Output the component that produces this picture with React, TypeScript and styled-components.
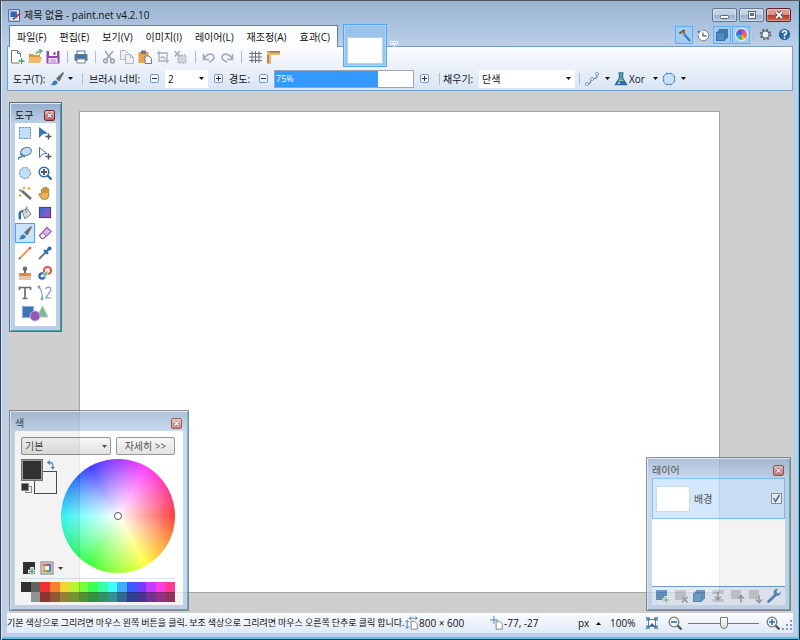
import React from "react";
import styled, { createGlobalStyle, css } from "styled-components";

const GlobalStyle = createGlobalStyle`
  *, *::before, *::after { box-sizing: border-box; }
  body { margin: 0; }
  body, button, input, select {
    font-family: "Open Sans", "Noto Sans CJK KR", sans-serif;
    font-size: 10px;
    line-height: 16px;
    color: #111;
  }
  button { padding: 0; border: 0; background: none; }
  svg { display: block; flex: none; }
`;

/* ---------- icons ---------- */

const art = {
  app: (
    <>
      <rect x="1" y="1" width="13" height="14" fill="#eef4fc" stroke="#26406c" />
      <rect x="3" y="3" width="8" height="7" fill="#2f62b8" />
      <path d="M3 12h8" stroke="#8fa9d4" />
      <path d="M15 5 9 11" stroke="#b03a48" strokeWidth="2" />
      <path d="M9 11l-3 3 1-4z" fill="#222" />
    </>
  ),
  newFile: (
    <>
      <path d="M2.500 1.500h6l3 3v9.500h-9z" fill="#fff" stroke="#777" />
      <path d="M8.500 1.500v3h3" fill="none" stroke="#777" />
      <path d="M12 8v7M8.500 11.500h7" stroke="#fff" strokeWidth="3" />
      <path d="M12.500 9v6M9.500 12h6" stroke="#4ba06a" strokeWidth="1.300" />
    </>
  ),
  open: (
    <>
      <path d="M2 5h4l1 1h6v8H2z" fill="#d69a45" />
      <path d="M1 14l2-6h12l-2 6z" fill="#f2b968" />
      <path d="M9 5q1-3 5-3M12 0l3 2-3 3" fill="none" stroke="#6aa98a" strokeWidth="1.400" />
    </>
  ),
  save: (
    <>
      <path d="M1.500 2h13v12.500h-13z" fill="#9149ae" />
      <rect x="4" y="2" width="8" height="5" fill="#fff" />
      <rect x="8.500" y="3" width="2" height="3" fill="#9149ae" />
      <rect x="3.500" y="9" width="9" height="5" fill="#f4eaf7" />
      <path d="M5 11h6M5 13h6" stroke="#9149ae" strokeWidth=".7" />
    </>
  ),
  print: (
    <>
      <rect x="4" y="2" width="8" height="4" fill="#fff" stroke="#3d77ab" />
      <rect x="1.500" y="5" width="13" height="7" rx="1" fill="#68788a" />
      <rect x="3.500" y="6" width="9" height="3" fill="#3d77ab" />
      <rect x="4" y="10" width="8" height="4" fill="#fff" stroke="#7c8997" />
    </>
  ),
  cut: (
    <g fill="none" stroke="#9aa3ad" strokeWidth="1.500">
      <path d="M4 2l7 9M12 2L5 11" />
      <circle cx="4.500" cy="12" r="1.900" />
      <circle cx="11.500" cy="12" r="1.900" />
    </g>
  ),
  copy: (
    <g fill="#eceff4" stroke="#b3b9c1">
      <path d="M1.500 1.500h5l3 3v6h-8z" />
      <path d="M6.500 5.500h5l3 3v6h-8z" />
      <path d="M11.500 5.500v3h3" fill="none" />
    </g>
  ),
  paste: (
    <>
      <rect x="1.500" y="3" width="10" height="11" fill="#e3a44c" />
      <rect x="4" y="1.500" width="5" height="3.500" fill="#777" />
      <path d="M8 7h4l2.500 2.500v5H8z" fill="#fff" stroke="#777" />
    </>
  ),
  crop: (
    <g fill="none" stroke="#aab1ba" strokeWidth="1.400">
      <path d="M4 2v10h10M2 4h10v10" />
      <path d="M5.500 9.500l2-2 3 2.500" />
    </g>
  ),
  deselect: (
    <>
      <rect x="5" y="6" width="8" height="8" fill="#cfd4da" stroke="#a8afb8" strokeDasharray="2 1" />
      <path d="M1.500 2l5.500 5.500M7 2L1.500 7.500" stroke="#a8afb8" strokeWidth="1.600" />
    </>
  ),
  undo: (
    <path d="M2.500 5v5.500h5.500M3 10C6 3.500 13 4 13 8.500c0 2.500-3 3.500-5 5" fill="none" stroke="#a2aab5" strokeWidth="1.600" />
  ),
  redo: (
    <path d="M13.500 5v5.500H8M13 10C10 3.500 3 4 3 8.500c0 2.500 3 3.500 5 5" fill="none" stroke="#a2aab5" strokeWidth="1.600" />
  ),
  grid: <path d="M5 2v12M8.500 2v12M12 2v12M2 4.500h13M2 8h13M2 11.500h13" stroke="#6a7078" />,
  rulers: (
    <>
      <path d="M2 2h13v4H6v9H2z" fill="#e8b676" />
      <path d="M6 2v2M8 2v2M10 2v2M12 2v2M14 2v2M2 7h2M2 9h2M2 11h2M2 13h2" stroke="#6b4a1c" strokeWidth=".8" />
      <path d="M2.500 2.500h12" stroke="#9c6d2d" strokeWidth=".6" />
    </>
  ),
  brush: (
    <>
      <path d="M14 2L8 7.500l2 2z" fill="#6e6e6e" stroke="#6e6e6e" strokeWidth="1.600" strokeLinejoin="round" />
      <path d="M1.500 14c2-.5 1.500-2.500 3-4 2-1.800 5 .8 4 2.500C7 14.500 3.500 14.500 1.500 14z" fill="#3d7fc1" />
    </>
  ),
  hammer: (
    <>
      <path d="M7 6l7 8" stroke="#3f79b6" strokeWidth="2.200" />
      <path d="M2 6l5-4 4 1-2 1.500L10 6 8.500 7.500 6.500 6 4 8z" fill="#666" stroke="#fff" strokeWidth=".5" />
    </>
  ),
  history: (
    <>
      <circle cx="8.500" cy="8.500" r="6" fill="#fff" stroke="#6e7885" strokeDasharray="31 7" strokeDashoffset="12" />
      <path d="M1 3h5L3 7z" fill="#4c91cf" />
      <path d="M8 5v4h4" fill="none" stroke="#555" strokeWidth="1.300" />
    </>
  ),
  layers: (
    <>
      <rect x="5.500" y="2.500" width="8" height="8" fill="#4b83bf" stroke="#3c6fa8" />
      <rect x="4" y="4" width="8" height="8" fill="#4b83bf" stroke="#3c6fa8" />
      <rect x="2.500" y="5.500" width="8" height="8" fill="#5189c2" stroke="#3c6fa8" />
    </>
  ),
  gear: (
    <g fill="none" stroke="#5f666e">
      <circle cx="8" cy="8" r="6.200" strokeWidth="2" strokeDasharray="2.430 2.430" />
      <circle cx="8" cy="8" r="4.400" strokeWidth="1.600" fill="#eaf1f9" />
    </g>
  ),
  help: (
    <>
      <circle cx="8" cy="8" r="7" fill="#2d68a6" />
      <path d="M5.500 6q0-2.500 2.500-2.500T10.500 6Q10.500 7.500 8 8v2" fill="none" stroke="#fff" strokeWidth="1.800" />
      <circle cx="8" cy="12.200" r="1.100" fill="#fff" />
    </>
  ),
  curve: (
    <g fill="#fff" stroke="#7595b8">
      <path d="M3 13C8 14 6 9 8 8s6 1 5-5" fill="none" stroke="#6f87a3" strokeWidth="1.200" />
      <circle cx="3" cy="13" r="1.500" />
      <circle cx="8" cy="8" r="1.500" />
      <circle cx="13" cy="3" r="1.500" />
    </g>
  ),
  flask: (
    <>
      <path d="M5.500 2h5M6.500 2v5L2.500 13.500h11L9.500 7V2z" fill="#dfeefa" stroke="#2f6ca8" strokeWidth="1.400" />
      <path d="M7 2h2v5l1.500 2.500h-5L7 7z" fill="#63a57c" />
      <path d="M4.500 10h7l2.500 4H2z" fill="#2f6ca8" />
      <circle cx="6" cy="12" r="1" fill="#cfe5f8" />
    </>
  ),
  selectionMode: (
    <>
      <rect x="2.500" y="2.500" width="11" height="11" rx="4" fill="#c7e3fb" stroke="#6fa3d2" />
      <path d="M5 2.500h6M5 13.500h6M2.500 5v6M13.500 5v6" stroke="#5d88b0" strokeWidth="1.400" strokeDasharray="2 1.500" />
    </>
  ),
  rectSelect: (
    <rect x="2.500" y="2.500" width="11" height="11" fill="#bfe0fc" stroke="#6d8297" strokeDasharray="2 1" />
  ),
  moveSelected: (
    <>
      <path d="M2 2l9 6.500-5 .5-4 4z" fill="#3c77b3" />
      <path d="M11.500 8.500v6M8.500 11.500h6" stroke="#555" strokeWidth="1.500" />
    </>
  ),
  lasso: (
    <>
      <ellipse cx="9" cy="6.500" rx="5.500" ry="4" transform="rotate(-20 9 6.500)" fill="#bfe0fc" stroke="#6d8297" strokeWidth="1.200" />
      <path d="M3 9c3 0 3 3 1 3s-3 1-2 2.500M5 10l3 2" fill="none" stroke="#3c77b3" strokeWidth="1.400" />
    </>
  ),
  moveSelection: (
    <>
      <path d="M2.500 2.500l7.500 6-4.500.5-3 3.500z" fill="#fff" stroke="#3c77b3" />
      <path d="M11.500 8.500v6M8.500 11.500h6" stroke="#555" strokeWidth="1.500" />
    </>
  ),
  ellipseSelect: <circle cx="8" cy="8" r="5.500" fill="#bfe0fc" stroke="#7d93a8" strokeDasharray="3 .6" />,
  zoomTool: (
    <>
      <path d="M10.500 10.500l4 4" stroke="#2f6ca8" strokeWidth="2.400" />
      <circle cx="7" cy="7" r="4.800" fill="#eaf4fd" stroke="#2f6ca8" strokeWidth="1.500" />
      <path d="M7 4v6M4 7h6" stroke="#555" strokeWidth="1.800" />
    </>
  ),
  wand: (
    <>
      <path d="M5 6l9 8" stroke="#6b6b6b" strokeWidth="2.400" />
      <path d="M2 5l3 1" stroke="#8c8c8c" strokeWidth="2" />
      <path d="M7 1.500v3M5.500 3h3M12 2v3M10.500 3.500h3M3 9v3M1.500 10.500h3" stroke="#e9a548" strokeWidth="1.200" />
    </>
  ),
  hand: (
    <path
      d="M4.500 9V4.500q.9-1.200 1.800 0V3q.9-1.200 1.800 0V2.500q.9-1.200 1.800 0V4q.9-1.200 1.800 0v7q-.5 3.500-4 3.500T3.500 12L1.500 9.500Q2.500 8 4.500 9zM6.300 4.500V8M8.100 3v5M9.900 4v4"
      fill="#eab25c"
      stroke="#a9762a"
      strokeWidth=".9"
    />
  ),
  bucket: (
    <>
      <path d="M5 6l5-2.500 4 5.500-6 5z" fill="#d5d9de" stroke="#7c838b" />
      <path d="M9 8V2.500q1.500-1.500 2 0" fill="none" stroke="#7c838b" />
      <path d="M2 14V8q0-2 4-2.500L3.500 8v6z" fill="#2f6ca8" stroke="#2f6ca8" />
    </>
  ),
  gradient: (
    <>
      <defs>
        <linearGradient id="gradientTool" x1="0" y1="0" x2="1" y2="1">
          <stop offset="0" stopColor="#2577d8" />
          <stop offset="1" stopColor="#b64bd2" />
        </linearGradient>
      </defs>
      <rect x="2.500" y="2.500" width="11" height="10" fill="url(#gradientTool)" stroke="#4b4b5b" strokeWidth="1.200" />
    </>
  ),
  eraser: (
    <>
      <path d="M2.500 10.500L10 2.500l4 4-7.500 7H4.500z" fill="#fff" stroke="#9149ae" strokeWidth="1.200" />
      <path d="M5.500 7.500l4 3.500L14 6.500l-4-4z" fill="#dcb6e9" stroke="#9149ae" />
    </>
  ),
  pencil: (
    <>
      <path d="M3 13l9-9" stroke="#e6a660" strokeWidth="2.200" />
      <path d="M12 4l1.800-1.800" stroke="#d4503e" strokeWidth="2.200" />
      <path d="M1.500 14.500L3.800 13.800 2.200 12.200z" fill="#444" />
    </>
  ),
  picker: (
    <>
      <path d="M2 14l7-7" stroke="#6b7784" strokeWidth="2" />
      <path d="M7 5l4 4M9 7l4-4" stroke="#2f6ca8" strokeWidth="2.200" />
      <circle cx="12.500" cy="3.500" r="2.100" fill="#2f6ca8" />
    </>
  ),
  stamp: (
    <>
      <circle cx="8" cy="3.800" r="2.300" fill="#6b6b6b" />
      <path d="M8 5v4" stroke="#6b6b6b" strokeWidth="2" />
      <rect x="2" y="8" width="12" height="3" rx="1" fill="#e08a48" />
      <path d="M2 12h12M2 14h12" stroke="#d98a50" />
    </>
  ),
  recolor: (
    <>
      <circle cx="10.500" cy="5.500" r="3.500" fill="none" stroke="#dc5a3c" strokeWidth="2.200" />
      <circle cx="5" cy="11" r="2.600" fill="none" stroke="#2f6ca8" strokeWidth="2.400" />
      <path d="M6 9l5-4v3q0 3-4 4z" fill="#7db894" stroke="#fff" strokeWidth=".6" />
    </>
  ),
  textTool: <path d="M2.500 5V2.500h11V5M8 2.500v11M5.500 13.500h5" fill="none" stroke="#6d6d6d" strokeWidth="1.700" />,
  lineCurve: (
    <g fill="none" stroke="#6c9bca" strokeWidth="1.200">
      <path d="M2 2q4 5 3 12" />
      <path d="M9 4q1-2.500 4-1.500 2 2-1 5.500l-3 5h5.500" />
      <circle cx="2" cy="2" r=".8" fill="#fff" />
      <circle cx="5" cy="14" r=".8" fill="#fff" />
    </g>
  ),
  swap: (
    <path d="M8 1L4 4l4 3M4 4h5q3 0 3 4v5M9.500 10.500l2.500 3 2.500-3" fill="none" stroke="#2f74b8" strokeWidth="1.800" />
  ),
  addColor: (
    <>
      <path d="M2 2h12v12H2z" fill="#000" />
      <path d="M11 7v9M7 11.500h9" stroke="#fff" strokeWidth="3.500" />
      <path d="M11 8.500v6M8 11.500h6" stroke="#3e8e61" strokeWidth="1.500" />
    </>
  ),
  palette: (
    <>
      <rect x="2" y="2" width="12" height="12" fill="#fff" stroke="#555" />
      <path d="M3.500 3.500H8V6H3.500z" fill="#d7522f" />
      <path d="M8 3.500h4.500V6H8z" fill="#7d3f9f" />
      <path d="M3.500 6H6v4H3.500z" fill="#e9a133" />
      <path d="M10 6h2.500v4H10z" fill="#2f6ca8" />
      <path d="M3.500 10H8v2.500H3.500z" fill="#b78f37" />
      <path d="M8 10h4.500v2.500H8z" fill="#3e8e61" />
    </>
  ),
  layerAdd: (
    <>
      <rect x="2" y="2" width="11" height="10" fill="#3c77b3" />
      <path d="M12 8v7M8.500 11.500h7" stroke="#fff" strokeWidth="3" />
      <path d="M12 9v6M9 12h6" stroke="#6fae86" strokeWidth="1.500" />
    </>
  ),
  layerDelete: (
    <>
      <rect x="2" y="2" width="11" height="10" fill="#b5bac1" />
      <path d="M9 9l5.500 5.500M14.500 9L9 14.500" stroke="#83888f" strokeWidth="1.600" />
    </>
  ),
  layerMerge: (
    <>
      <path d="M2.500 2h11v4h-11zM2.500 11h11v3h-11z" fill="#b5bac1" />
      <path d="M8 4v7M5 8.500L8 11.500l3-3" fill="none" stroke="#83888f" strokeWidth="1.600" />
    </>
  ),
  layerUp: (
    <>
      <rect x="2" y="2" width="10" height="9" fill="#b5bac1" />
      <path d="M12 14.500V8M9 10.500L12 7.500l3 3" fill="none" stroke="#83888f" strokeWidth="1.600" />
    </>
  ),
  layerDown: (
    <>
      <rect x="2" y="2" width="10" height="9" fill="#b5bac1" />
      <path d="M12 7.500v6.500M9 11.500l3 3 3-3" fill="none" stroke="#83888f" strokeWidth="1.600" />
    </>
  ),
  wrench: (
    <>
      <path d="M2.500 13.500L10 6.500" stroke="#2f6ca8" strokeWidth="2.800" strokeLinecap="round" />
      <path d="M14.500 3.500a3.500 3.500 0 1 1-2.500-2.500L10.500 3l.5 2 2 .5z" fill="#2f6ca8" />
    </>
  ),
  imageSize: (
    <>
      <path d="M7 6h4l3 3v6H7z" fill="#fff" stroke="#777" />
      <path d="M5 2.500h9M7 .5l-2 2 2 2M12 .5l2 2-2 2M2.500 5v9M.5 7l2-2 2 2M.5 12l2 2 2-2" fill="none" stroke="#3c77b3" />
    </>
  ),
  cursorPos: (
    <>
      <path d="M7 6h4l3 3v6H7z" fill="#fff" stroke="#777" />
      <path d="M4.500 0v9M0 4.500h9" stroke="#3c77b3" />
    </>
  ),
  fit: (
    <>
      <rect x="4.500" y="4.500" width="7" height="7" fill="#fff" stroke="#777" />
      <path d="M5.500 11l2.500-3 3 3z" fill="#2f6ca8" />
      <path d="M2 2l2.500 2.500M14 2l-2.500 2.500M2 14l2.500-2.500M14 14l-2.500-2.500M5 2v3H2M11 2v3h3M5 14v-3H2M11 14v-3h3" fill="none" stroke="#3c77b3" strokeWidth="1.200" />
    </>
  ),
  zoomOut: (
    <>
      <path d="M10.500 10.500l4 4" stroke="#555" strokeWidth="2.400" />
      <circle cx="7" cy="7" r="4.800" fill="#f3f8fd" stroke="#777" strokeWidth="1.300" />
      <path d="M4 7h6" stroke="#2f6ca8" strokeWidth="1.600" />
    </>
  ),
  zoomIn: (
    <>
      <path d="M10.500 10.500l4 4" stroke="#555" strokeWidth="2.400" />
      <circle cx="7" cy="7" r="4.800" fill="#f3f8fd" stroke="#777" strokeWidth="1.300" />
      <path d="M4 7h6M7 4v6" stroke="#2f6ca8" strokeWidth="1.600" />
    </>
  ),
};

type IconName = keyof typeof art;

function Icon({ name, size = 16 }: { name: IconName; size?: number }) {
  return (
    <svg width={size} height={size} viewBox="0 0 16 16" aria-hidden="true">
      {art[name]}
    </svg>
  );
}

function Caret({ up = false }: { up?: boolean }) {
  return (
    <svg width="5" height="3" viewBox="0 0 5 3" aria-hidden="true">
      <path d={up ? "M0 3h5L2.500 0z" : "M0 0h5L2.500 3z"} fill="#111" />
    </svg>
  );
}

/* ---------- window frame ---------- */

const Window = styled.div`
  display: flex;
  flex-direction: column;
  min-height: 100vh;
  padding: 0 7px 7px;
  background: linear-gradient(#9ab3cf 0, #b9cfea 44px);
  border-top: 1px solid #55585e;
  box-shadow: inset 1px 0 #3c3f4c, inset 2px 0 #d5e4f5, inset -1px 0 #1d2b35, inset -2px 0 #55cbe6,
    inset 0 -1px #142c36, inset 0 -3px #4cc9e8;
`;

const TitleBar = styled.header`
  display: flex;
  align-items: center;
  height: 24px;
  padding: 4px 2px 0 1px;
  gap: 3px;
`;

const Title = styled.h1`
  flex: 1;
  margin: 0;
  font-size: 10px;
  font-weight: 400;
`;

const CaptionButtons = styled.div`
  display: flex;
  gap: 2px;
`;

const CaptionButton = styled.button<{ $danger?: boolean }>`
  display: grid;
  place-items: center;
  width: 25px;
  height: 14px;
  border: 1px solid ${(p) => (p.$danger ? "#5c2430" : "#65778d")};
  border-radius: 2px;
  box-shadow: inset 0 0 0 1px rgba(255, 255, 255, 0.35);
  background: ${(p) =>
    p.$danger
      ? "linear-gradient(#dd9b90 0 45%, #b8392c 50%, #d3694f)"
      : "linear-gradient(#c3d3e6 0 45%, #9cb2cc 50%, #b3c8e0)"};
`;

const MenuRow = styled.div`
  display: flex;
  position: relative;
  z-index: 1;
  justify-content: space-between;
  height: 22px;
  margin: 0 0 -1px;
  padding-left: 2px;
`;

const MenuBar = styled.nav`
  display: flex;
  align-items: center;
  padding: 0 7px;
  gap: 13px;
  background: #fbfdff;
  border: 1px solid #587eae;
  border-bottom: 0;
`;

const MenuItem = styled.button`
  white-space: nowrap;
`;

const DocumentTab = styled.button`
  position: absolute;
  left: 336px;
  top: -1px;
  width: 44px;
  height: 43px;
  padding: 12px 3px 2px;
  border: 1px solid #51a7f3;
  box-shadow: inset 0 0 0 1px #add5f9;
  background: #99c3ed;
`;

const Thumb = styled.span`
  display: block;
  width: 100%;
  height: 100%;
  background: #fff;
  border: 1px solid #b7cfe6;
`;

const TabList = styled.button`
  position: absolute;
  left: 383px;
  top: 16px;
`;

const Utilities = styled.div`
  display: flex;
  align-items: center;
  gap: 1px;
  height: 19px;
`;

const Utility = styled.button<{ $on?: boolean }>`
  display: grid;
  place-items: center;
  width: 18px;
  height: 18px;
  border: 1px solid ${(p) => (p.$on ? "#60aef3" : "transparent")};
  background: ${(p) => (p.$on ? "#a3ccf3" : "transparent")};
`;

const Wheel = styled.span`
  display: block;
  width: 114px;
  height: 114px;
  border-radius: 50%;
  background: radial-gradient(closest-side, #fff, rgba(255, 255, 255, 0)),
    conic-gradient(from 90deg, #f00, #ff0, #0f0, #0ff, #00f, #f0f, #f00);
`;

const MiniWheel = styled.span`
  width: 13px;
  height: 13px;
  border: 1px solid #fff;
  border-radius: 50%;
  background: conic-gradient(#a04fd0 0 12%, #e85a9c 0 25%, #f2603f 0 37%, #f6b43a 0 50%, #55b557 0 62%, #3fb6d0 0 75%, #3f6ed8 0 87%, #6a4fd0 0);
`;

/* ---------- ribbon ---------- */

const Ribbon = styled.div`
  border: 1px solid #7b9dc9;
  background: linear-gradient(#fcfdff, #d9e4f4);
`;

const ToolbarRow = styled.div<{ $options?: boolean }>`
  display: flex;
  align-items: center;
  height: ${(p) => (p.$options ? 23 : 20)}px;
  padding-left: ${(p) => (p.$options ? 5 : 1)}px;
  gap: ${(p) => (p.$options ? 0 : 2)}px;
`;

const ToolbarButton = styled.button<{ $w?: number }>`
  display: grid;
  place-items: center;
  flex: none;
  width: ${(p) => p.$w ?? 16}px;
  height: 18px;
`;

const Separator = styled.span<{ $w?: number }>`
  flex: none;
  width: ${(p) => p.$w ?? 8}px;
  height: 12px;
  background: linear-gradient(#a9bdd6, #a9bdd6) center / 1px 100% no-repeat;
`;

const OptionLabel = styled.label<{ $w: number }>`
  flex: none;
  width: ${(p) => p.$w}px;
  white-space: nowrap;
`;

const StepButton = styled.button`
  display: grid;
  place-items: center;
  flex: none;
  width: 9px;
  height: 9px;
  margin: 0 6px;
  border: 1px solid #6f9cca;
  border-radius: 2px;
  background: #f3f8fe;
`;

const SelectBox = styled.span<{ $w: number; $raised?: boolean }>`
  display: grid;
  flex: none;
  align-items: center;
  width: ${(p) => p.$w}px;
  height: 18px;
  > * { grid-area: 1 / 1; }
  > svg { justify-self: end; margin-right: 4px; pointer-events: none; }
  > select {
    appearance: none;
    width: 100%;
    height: 100%;
    padding: 0 3px;
    border: 0;
    background: #fff;
    ${(p) =>
      p.$raised &&
      css`
        border: 1px solid #777;
        border-radius: 2px;
        background: linear-gradient(#f4f4f4, #dadada);
      `}
  }
`;

const Meter = styled.span`
  display: grid;
  flex: none;
  align-items: center;
  width: 140px;
  height: 18px;
  > * { grid-area: 1 / 1; }
  > input {
    appearance: none;
    width: 100%;
    height: 100%;
    margin: 0;
    border: 1px solid #9aa7b8;
    background: linear-gradient(90deg, #3399ff 75%, #fff 75%);
  }
  > input::-webkit-slider-thumb { appearance: none; width: 1px; height: 1px; }
  > output { padding-left: 2px; color: #fff; font-size: 9px; pointer-events: none; }
`;

/* ---------- workspace ---------- */

const Workspace = styled.main`
  display: flex;
  position: relative;
  flex: 1;
  padding: 20px 73px;
  background: #cfcfcf;
`;

const Canvas = styled.div`
  flex: 1;
  margin-left: -1px;
  background: #fff;
  border: 1px solid #a4a4a4;
`;

const Palette = styled.section<{ $dim?: boolean }>`
  position: absolute;
  padding: 0 5px 5px;
  border: 1px solid #5f6d78;
  box-shadow: inset 1px 1px #dbe7f4, inset -1px -1px #45a0ad;
  background: linear-gradient(#94aecb, #b9cfea 20px);
  opacity: ${(p) => (p.$dim ? 0.76 : 1)};
`;

const ToolsPalette = styled(Palette)`
  left: 2px;
  top: 11px;
  width: 53px;
`;

const ColorsPalette = styled(Palette)`
  left: 2px;
  bottom: 2px;
  width: 180px;
`;

const LayersPalette = styled(Palette)`
  right: 2px;
  bottom: 2px;
  width: 145px;
`;

const PaletteTitle = styled.header`
  display: flex;
  align-items: center;
  justify-content: space-between;
  height: 20px;
  padding: 4px 1px 0 0;
`;

const PaletteName = styled.h2`
  margin: 0;
  font-size: 10px;
  font-weight: 400;
`;

const CloseButton = styled.button`
  display: grid;
  place-items: center;
  width: 11px;
  height: 11px;
  border: 1px solid #7a2b2f;
  border-radius: 2px;
  background: linear-gradient(#e7bbb5, #c45c50);
`;

const ToolGrid = styled.div`
  display: grid;
  grid-template-columns: 20px 20px;
  grid-auto-rows: 20px;
  padding: 0 0 3px;
  background: #fff;
`;

const Tool = styled.button<{ $on?: boolean; $wide?: boolean }>`
  display: grid;
  place-items: center;
  grid-column: ${(p) => (p.$wide ? "span 2" : "auto")};
  border: 1px solid ${(p) => (p.$on ? "#4ba6f7" : "transparent")};
  background: ${(p) => (p.$on ? "#c9e3fb" : "transparent")};
`;

const ColorsBody = styled.div`
  padding: 6px 8px 3px 6px;
  background: #fff;
`;

const ColorsHeader = styled.div`
  display: flex;
  justify-content: space-between;
`;

const MoreButton = styled.button`
  width: 59px;
  height: 18px;
  border: 1px solid #777;
  border-radius: 2px;
  background: linear-gradient(#f4f4f4, #dadada);
  line-height: 14px;
`;

const WheelRow = styled.div`
  display: flex;
  justify-content: space-between;
  height: 122px;
  padding-top: 4px;
`;

const SwatchColumn = styled.div`
  display: flex;
  flex-direction: column;
  justify-content: space-between;
  width: 40px;
`;

const PaletteActions = styled.div`
  display: flex;
  align-items: center;
  gap: 2px;
`;

const WheelField = styled.div`
  display: grid;
  place-items: center;
  align-self: flex-start;
  > * { grid-area: 1 / 1; }
`;

const WheelMarker = styled.span`
  width: 8px;
  height: 8px;
  border: 1px solid #222;
  border-radius: 50%;
  background: #fff;
`;

const SwatchGrid = styled.div`
  display: grid;
  grid-template-columns: repeat(16, 1fr);
  grid-auto-rows: 10px;
  margin-top: 1px;
  padding-top: 3px;
  border-top: 1px solid #cfe0ec;
`;

const Swatch = styled.button<{ $color: string }>`
  background: ${(p) => p.$color};
`;

const LayerItem = styled.label`
  display: flex;
  align-items: center;
  height: 41px;
  padding: 0 2px 0 3px;
  gap: 4px;
  border: 1px solid #62b0f8;
  background: #c6e1fd;
`;

const LayerThumb = styled.span`
  width: 34px;
  height: 26px;
  border: 1px solid #c2ccd6;
  background: #fff;
`;

const LayerName = styled.span`
  flex: 1;
`;

const Check = styled.input`
  appearance: none;
  width: 11px;
  height: 11px;
  margin: 0;
  border: 1px solid #777;
  background: #f4f4f4
    url("data:image/svg+xml,%3Csvg xmlns='http://www.w3.org/2000/svg' viewBox='0 0 9 9'%3E%3Cpath d='M1.500 4l2 3.500L7.500 1' fill='none' stroke='%23213f8c' stroke-width='1.500'/%3E%3C/svg%3E");
`;

const LayerList = styled.div`
  height: 108px;
  background: #fff;
`;

const LayerTools = styled.div`
  display: flex;
  align-items: center;
  justify-content: space-between;
  height: 19px;
  padding: 0 3px 0 2px;
  border-top: 1px solid #4c7db4;
  background: #dbe6f4;
`;

/* ---------- status bar ---------- */

const StatusBar = styled.footer`
  display: flex;
  align-items: center;
  height: 20px;
  white-space: nowrap;
  background: linear-gradient(#fbfdff, #dfe9f7);
`;

const Hint = styled.span`
  flex: 1;
  font-family: "Noto Sans CJK KR", sans-serif;
  font-size: 9px;
`;

const StatusField = styled.span<{ $w: number }>`
  display: flex;
  align-items: center;
  flex: none;
  width: ${(p) => p.$w}px;
`;

const UnitButton = styled.button`
  display: flex;
  align-items: center;
  flex: none;
  width: 32px;
  gap: 7px;
`;

const StatusButton = styled.button<{ $gap?: number }>`
  flex: none;
  margin-right: ${(p) => p.$gap ?? 0}px;
`;

const ZoomSlider = styled.input`
  appearance: none;
  flex: none;
  width: 71px;
  height: 14px;
  margin: 0 6px 0 0;
  background: linear-gradient(#777, #777) center / 100% 1px no-repeat;
  &::-webkit-slider-thumb {
    appearance: none;
    width: 8px;
    height: 12px;
    border: 1px solid #777;
    border-radius: 1px 1px 4px 4px;
    background: linear-gradient(#fff, #ddd);
  }
`;

/* ---------- data ---------- */

const menus = ["파일(F)", "편집(E)", "보기(V)", "이미지(I)", "레이어(L)", "재조정(A)", "효과(C)"];

const toolbar: IconName[][] = [
  ["newFile", "open", "save"],
  ["print"],
  ["cut", "copy", "paste", "crop", "deselect"],
  ["undo", "redo"],
  ["grid", "rulers"],
];

const tools: IconName[] = [
  "rectSelect", "moveSelected", "lasso", "moveSelection", "ellipseSelect", "zoomTool",
  "wand", "hand", "bucket", "gradient", "brush", "eraser",
  "pencil", "picker", "stamp", "recolor", "textTool", "lineCurve",
];

const swatches = [
  "#000", "#404040", "#f00", "#ff6a00", "#ffd800", "#b6ff00", "#4cff00", "#00ff21",
  "#00ff90", "#0ff", "#0094ff", "#0026ff", "#4800ff", "#b200ff", "#ff00dc", "#ff006e",
  "#fff", "#808080", "#7f0000", "#7f3300", "#7f6a00", "#5b7f00", "#267f00", "#007f0e",
  "#007f46", "#007f7f", "#004a7f", "#00137f", "#21007f", "#57007f", "#7f006e", "#7f0037",
];

const layerTools: IconName[] = ["layerAdd", "layerDelete", "layers", "layerMerge", "layerUp", "layerDown", "wrench"];

/* ---------- parts ---------- */

function Step({ plus = false, label }: { plus?: boolean; label: string }) {
  return (
    <StepButton aria-label={label}>
      <svg width="5" height="5" viewBox="0 0 5 5" aria-hidden="true">
        <path d={plus ? "M0 2.500h5M2.500 0v5" : "M0 2.500h5"} stroke="#333" />
      </svg>
    </StepButton>
  );
}

function PaletteHeader({ name }: { name: string }) {
  return (
    <PaletteTitle>
      <PaletteName>{name}</PaletteName>
      <CloseButton aria-label={`${name} 닫기`}>
        <svg width="7" height="7" viewBox="0 0 7 7" aria-hidden="true">
          <path d="M1.500 1.500l4 4M5.500 1.500l-4 4" stroke="#5a4650" strokeWidth="2.600" />
          <path d="M1.500 1.500l4 4M5.500 1.500l-4 4" stroke="#fff" strokeWidth="1.400" />
        </svg>
      </CloseButton>
    </PaletteTitle>
  );
}

function CurrentColors() {
  return (
    <svg width="36" height="36" viewBox="0 0 36 36" aria-hidden="true">
      <rect x="13.500" y="12.500" width="22" height="22" fill="#fff" stroke="#222" />
      <rect x=".5" y=".5" width="21" height="21" fill="#fff" stroke="#555" />
      <rect x="1" y="1" width="20" height="20" fill="#8a8a8a" />
      <rect x="2" y="2" width="18" height="18" fill="#000" />
      <rect x="4.500" y="27.500" width="6" height="6" fill="#fff" stroke="#777" />
      <rect x=".5" y="24.500" width="7" height="7" fill="#000" stroke="#777" />
      <g transform="translate(24 1) scale(.65)">{art.swap}</g>
    </svg>
  );
}

function ShapesIcon() {
  return (
    <svg width="30" height="18" viewBox="0 0 30 18" aria-hidden="true">
      <rect x="2.500" y="2.500" width="11" height="11" fill="#3c77b3" stroke="#88b0da" />
      <path d="M22.500 2l5.500 11H17z" fill="#7fb695" stroke="#a9cfb8" />
      <circle cx="15" cy="12" r="5" fill="#8d5bb4" stroke="#c7a6dd" />
    </svg>
  );
}

function SizeGrip() {
  return (
    <svg width="12" height="14" viewBox="0 0 12 14" aria-hidden="true">
      <path d="M9 4h2v2H9zM9 8h2v2H9zM5 8h2v2H5zM9 12h2v2H9zM5 12h2v2H5zM1 12h2v2H1z" fill="#8b97a8" />
    </svg>
  );
}

export default function App() {
  return (
    <>
      <GlobalStyle />
      <Window>
        <TitleBar>
          <Icon name="app" size={13} />
          <Title>제목 없음 - paint.net v4.2.10</Title>
          <CaptionButtons>
            <CaptionButton aria-label="최소화">
              <svg width="10" height="8" viewBox="0 0 10 8">
                <rect x=".5" y="4.500" width="8" height="3" rx="1" fill="#fff" stroke="#55647a" />
              </svg>
            </CaptionButton>
            <CaptionButton aria-label="최대화">
              <svg width="10" height="8" viewBox="0 0 10 8">
                <rect x="1.500" y=".5" width="7" height="7" fill="#fff" stroke="#55647a" />
                <rect x="3.500" y="2.500" width="3" height="2" fill="#8197b2" stroke="#55647a" />
              </svg>
            </CaptionButton>
            <CaptionButton $danger aria-label="닫기">
              <svg width="10" height="8" viewBox="0 0 10 8">
                <path d="M2 1l6 6M8 1L2 7" stroke="#51353d" strokeWidth="3.400" />
                <path d="M2 1l6 6M8 1L2 7" stroke="#fff" strokeWidth="1.900" />
              </svg>
            </CaptionButton>
          </CaptionButtons>
        </TitleBar>

        <MenuRow>
          <MenuBar>
            {menus.map((m) => (
              <MenuItem key={m}>{m}</MenuItem>
            ))}
          </MenuBar>
          <DocumentTab aria-label="제목 없음">
            <Thumb />
          </DocumentTab>
          <TabList aria-label="이미지 목록">
            <svg width="8" height="7" viewBox="0 0 8 7">
              <path d="M0 0h8v3L4 7 0 3z" fill="#fff" />
              <path d="M1 1.500h1.500M3.500 1.500h1M5.500 1.500H7M1.500 3.500L4 5.500l2.500-2" fill="none" stroke="#7d9cc6" />
            </svg>
          </TabList>
          <Utilities>
            <Utility $on aria-label="도구"><Icon name="hammer" /></Utility>
            <Utility aria-label="작업 내역"><Icon name="history" size={14} /></Utility>
            <Utility $on aria-label="레이어"><Icon name="layers" /></Utility>
            <Utility $on aria-label="색"><MiniWheel /></Utility>
            <Separator $w={4} />
            <Utility aria-label="설정"><Icon name="gear" size={13} /></Utility>
            <Utility aria-label="도움말"><Icon name="help" size={13} /></Utility>
          </Utilities>
        </MenuRow>

        <Ribbon>
          <ToolbarRow>
            {toolbar.map((group, i) => (
              <React.Fragment key={i}>
                {i > 0 && <Separator />}
                {group.map((name) => (
                  <ToolbarButton key={name} aria-label={name}><Icon name={name} /></ToolbarButton>
                ))}
              </React.Fragment>
            ))}
          </ToolbarRow>
          <ToolbarRow $options>
            <OptionLabel as="span" $w={36}>도구(T):</OptionLabel>
            <ToolbarButton aria-label="브러시"><Icon name="brush" /></ToolbarButton>
            <ToolbarButton $w={10} aria-label="도구 선택"><Caret /></ToolbarButton>
            <Separator $w={14} />
            <OptionLabel htmlFor="brush-width" $w={55}>브러시 너비:</OptionLabel>
            <Step label="너비 줄이기" />
            <SelectBox $w={43}>
              <select id="brush-width" defaultValue="2"><option>2</option></select>
              <Caret />
            </SelectBox>
            <Step plus label="너비 늘리기" />
            <OptionLabel htmlFor="hardness" $w={24}>경도:</OptionLabel>
            <Step label="경도 줄이기" />
            <Meter>
              <input id="hardness" type="range" min="0" max="100" defaultValue="75" />
              <output htmlFor="hardness">75%</output>
            </Meter>
            <Step plus label="경도 늘리기" />
            <Separator />
            <OptionLabel htmlFor="fill" $w={36}>채우기:</OptionLabel>
            <SelectBox $w={96}>
              <select id="fill" defaultValue="단색"><option>단색</option></select>
              <Caret />
            </SelectBox>
            <Separator />
            <ToolbarButton $w={18} aria-label="곡선"><Icon name="curve" /></ToolbarButton>
            <ToolbarButton $w={12} aria-label="곡선 선택"><Caret /></ToolbarButton>
            <ToolbarButton aria-label="혼합 모드"><Icon name="flask" /></ToolbarButton>
            <OptionLabel as="span" $w={20}>Xor</OptionLabel>
            <ToolbarButton $w={12} aria-label="혼합 모드 선택"><Caret /></ToolbarButton>
            <ToolbarButton aria-label="선택 클리핑"><Icon name="selectionMode" /></ToolbarButton>
            <ToolbarButton $w={12} aria-label="클리핑 선택"><Caret /></ToolbarButton>
          </ToolbarRow>
        </Ribbon>

        <Workspace>
          <Canvas />

          <ToolsPalette>
            <PaletteHeader name="도구" />
            <ToolGrid>
              {tools.map((name) => (
                <Tool key={name} $on={name === "brush"} aria-label={name}><Icon name={name} /></Tool>
              ))}
              <Tool $wide aria-label="도형"><ShapesIcon /></Tool>
            </ToolGrid>
          </ToolsPalette>

          <ColorsPalette $dim>
            <PaletteHeader name="색" />
            <ColorsBody>
              <ColorsHeader>
                <SelectBox $w={90} $raised>
                  <select aria-label="색 대상" defaultValue="기본"><option>기본</option></select>
                  <Caret />
                </SelectBox>
                <MoreButton>자세히 &gt;&gt;</MoreButton>
              </ColorsHeader>
              <WheelRow>
                <SwatchColumn>
                  <CurrentColors />
                  <PaletteActions>
                    <ToolbarButton aria-label="색 추가"><Icon name="addColor" /></ToolbarButton>
                    <ToolbarButton aria-label="색상표"><Icon name="palette" /></ToolbarButton>
                    <ToolbarButton $w={6} aria-label="색상표 메뉴"><Caret /></ToolbarButton>
                  </PaletteActions>
                </SwatchColumn>
                <WheelField>
                  <Wheel />
                  <WheelMarker />
                </WheelField>
              </WheelRow>
              <SwatchGrid>
                {swatches.map((c) => (
                  <Swatch key={c} $color={c} aria-label={c} />
                ))}
              </SwatchGrid>
            </ColorsBody>
          </ColorsPalette>

          <LayersPalette $dim>
            <PaletteHeader name="레이어" />
            <LayerList>
              <LayerItem>
                <LayerThumb />
                <LayerName>배경</LayerName>
                <Check type="checkbox" defaultChecked />
              </LayerItem>
            </LayerList>
            <LayerTools>
              {layerTools.map((name) => (
                <ToolbarButton key={name} aria-label={name}><Icon name={name} /></ToolbarButton>
              ))}
            </LayerTools>
          </LayersPalette>
        </Workspace>

        <StatusBar>
          <Hint>기본 색상으로 그리려면 마우스 왼쪽 버튼을 클릭. 보조 색상으로 그리려면 마우스 오른쪽 단추로 클릭 합니다.</Hint>
          <StatusField $w={85}><Icon name="imageSize" size={14} />800 × 600</StatusField>
          <StatusField $w={88}><Icon name="cursorPos" size={14} />-77, -27</StatusField>
          <UnitButton>px <Caret up /></UnitButton>
          <StatusField $w={34}>100%</StatusField>
          <StatusButton $gap={7} aria-label="창에 맞추기"><Icon name="fit" /></StatusButton>
          <StatusButton $gap={5} aria-label="축소"><Icon name="zoomOut" /></StatusButton>
          <ZoomSlider type="range" aria-label="확대/축소" defaultValue="50" />
          <StatusButton aria-label="확대"><Icon name="zoomIn" /></StatusButton>
          <SizeGrip />
        </StatusBar>
      </Window>
    </>
  );
}
